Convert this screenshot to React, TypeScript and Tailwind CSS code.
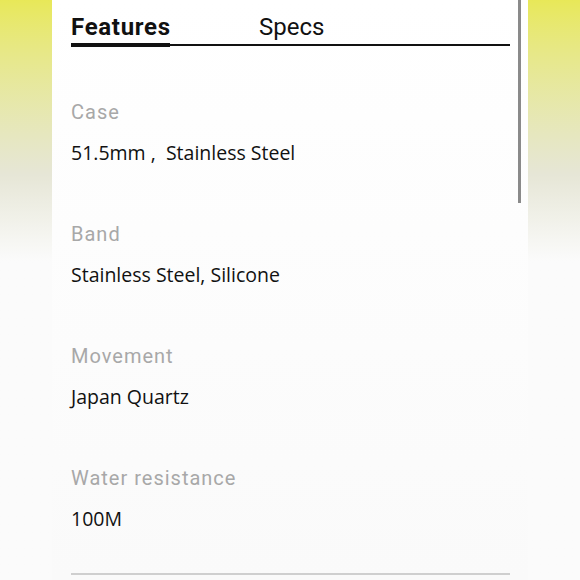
import React from 'react';

const features = [
  { label: 'Case', value: '51.5mm ,  Stainless Steel' },
  { label: 'Band', value: 'Stainless Steel, Silicone' },
  { label: 'Movement', value: 'Japan Quartz' },
  { label: 'Water resistance', value: '100M' },
];

export default function App() {
  return (
    <div className="flex h-[580px] w-[580px] overflow-hidden bg-[#fbfbfb]">
      {/* left glow strip */}
      <div className="h-full w-[52px] shrink-0 bg-gradient-to-b from-[#e8e858] via-[#e6e6d6] via-30% to-[#fbfbfb] to-45%" />

      {/* panel */}
      <div className="relative h-full w-[476px] shrink-0 bg-gradient-to-b from-white to-[#fafafa]">
        <div className="pl-[19px] pr-[18px] pt-[13px]">
          {/* tabs */}
          <div className="relative flex h-[33px] items-start border-b-2 border-[#111]">
            <div className="relative h-full w-[99px]">
              <span className="font-['Roboto',sans-serif] text-[24px] font-bold leading-[28px] tracking-[0.7px] text-[#111]">
                Features
              </span>
              <div className="absolute -bottom-[3px] left-0 h-[4px] w-full bg-[#111]" />
            </div>
            <span className="ml-[89px] font-['Roboto',sans-serif] text-[24px] leading-[28px] text-[#111]">
              Specs
            </span>
          </div>

          {/* feature list */}
          <div className="pt-[54px]">
            {features.map((f) => (
              <div key={f.label} className="h-[122px]">
                <div className="font-['Roboto',sans-serif] text-[20px] leading-[24px] tracking-[1px] text-[#a8a8a8]">
                  {f.label}
                </div>
                <div className="mt-[17px] whitespace-pre font-['Open_Sans',sans-serif] text-[19.5px] leading-[24px] text-[#111]">
                  {f.value}
                </div>
              </div>
            ))}
          </div>
        </div>
        <div className="absolute bottom-[5px] left-[19px] h-[2px] w-[439px] bg-[#cfcfcf]" />

        {/* scrollbar */}
        <div className="absolute right-[7px] top-0 h-[203px] w-[3px] bg-[#8a8a8a]" />
      </div>

      {/* right glow strip */}
      <div className="h-full w-[52px] shrink-0 bg-gradient-to-b from-[#e8e858] via-[#e6e6d6] via-30% to-[#fbfbfb] to-45%" />
    </div>
  );
}
